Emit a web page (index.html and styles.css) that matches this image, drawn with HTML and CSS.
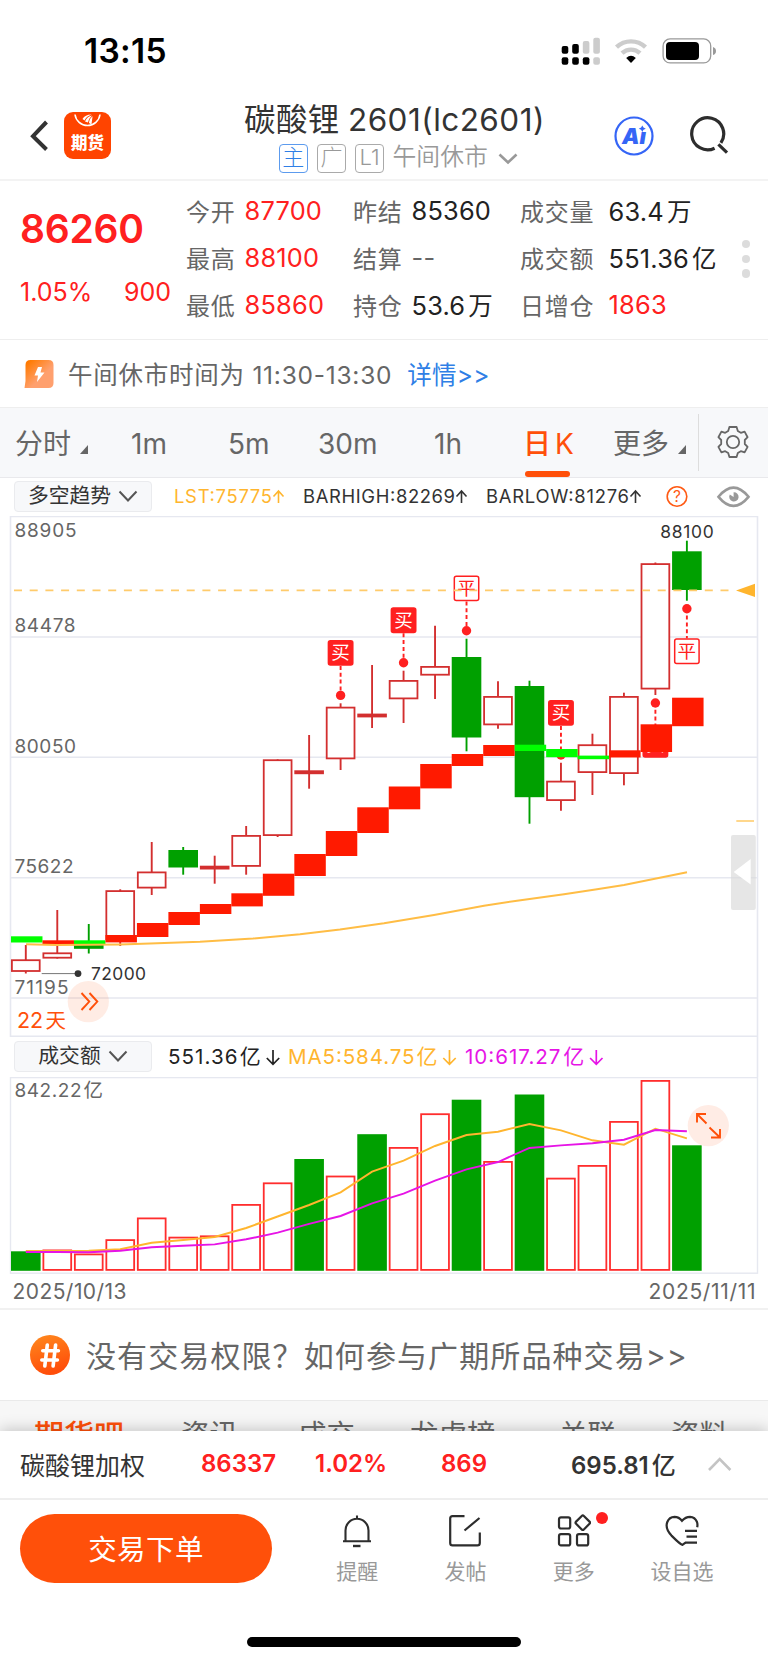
FILE: index.html
```html
<!DOCTYPE html>
<html lang="zh-CN">
<head>
    <meta charset="UTF-8">
    <meta name="viewport" content="width=device-width, initial-scale=1.0">
    <title>碳酸锂2601(lc2601)</title>
    <link rel="stylesheet" href="styles.css">
</head>
<body>
    <div class="statusbar">
        <span class="time">13:15</span>
        <svg class="status-icons" width="160" height="36" viewBox="558 34 160 36">
            <g fill="#000">
                <rect x="561.7" y="46" width="6.6" height="7.8" rx="2"/>
                <rect x="572.2" y="44" width="6.6" height="9.8" rx="2"/>
                <rect x="561.7" y="57.2" width="6.6" height="7.6" rx="2"/>
                <rect x="572.2" y="57.2" width="6.6" height="7.6" rx="2"/>
                <rect x="582.8" y="57.2" width="6.6" height="7.6" rx="2"/>
            </g>
            <g fill="#ccc">
                <rect x="582.8" y="41" width="6.6" height="12.8" rx="2"/>
                <rect x="593.3" y="37.7" width="6.6" height="16.1" rx="2"/>
                <rect x="593.3" y="57.2" width="6.6" height="7.6" rx="2"/>
            </g>
            <path d="M616.5 47.2 A21 21 0 0 1 645.5 47.2" fill="none" stroke="#ccc" stroke-width="4.4"/>
            <path d="M622 53.2 A13 13 0 0 1 640 53.2" fill="none" stroke="#ccc" stroke-width="4.4"/>
            <path d="M626.2 58 Q631 53.6 635.8 58 L631 63 Z" fill="#000"/>
            <rect x="663.1" y="38.9" width="47.6" height="24" rx="7" fill="none" stroke="#999" stroke-width="1.3"/>
            <rect x="666" y="42" width="33" height="18" rx="4" fill="#000"/>
            <path d="M713 47 Q716 48 716 51 Q716 54 713 55 Z" fill="#999"/>
        </svg>
    </div>

    <div class="header">
        <svg class="back" width="20" height="34" viewBox="0 0 20 34"><path d="M16.5 3 L3 17.2 L16.5 30.5" fill="none" stroke="#333" stroke-width="4"/></svg>
        <div class="logo">
            <svg width="47" height="20" viewBox="0 0 47 20">
                <path d="M11 0 A12.6 12.6 0 0 0 36 0" transform="translate(0,2.5)" fill="none" stroke="#fff" stroke-width="1.6"/>
                <path d="M18.5 7 Q21 2.5 27.5 2.5 Q22 4.5 20.5 8.5 Z M21 9.5 Q23 4.5 28 3.5 Q25 6 24 10.5 Z M25 11 Q25 7 28.6 4.2 Q28 8 27.5 12.5 Z" fill="#fff"/>
            </svg>
            <span>期货</span>
        </div>
        <div class="title">
            <h1>碳酸锂 <b>2601(lc2601)</b></h1>
            <div class="tags">
                <span class="tag tag-main">主</span>
                <span class="tag">广</span>
                <span class="tag">L1</span>
                <span class="state">午间休市</span>
                <svg width="20" height="14" viewBox="0 0 20 14"><path d="M1.5 2.5 L10 10.5 L18.5 2.5" fill="none" stroke="#999" stroke-width="2.6"/></svg>
            </div>
        </div>
        <svg class="ai" width="40" height="40" viewBox="0 0 40 40">
            <circle cx="20" cy="20" r="18.5" fill="none" stroke="#3565f6" stroke-width="2.2"/>
            <text class="ai-text" x="8" y="27.6">Aı</text>
            <path d="M28.3 9.4 L29.5 11.5 L31.8 12.7 L29.5 13.8 L28.3 16 L27.1 13.8 L24.8 12.7 L27.1 11.5 Z" fill="#3565f6"/>
        </svg>
        <svg class="search" width="40" height="40" viewBox="0 0 40 40">
            <path d="M25.6 32.2 A16 16 0 1 1 31.9 26.8" fill="none" stroke="#2d2d2d" stroke-width="3.2"/>
            <path d="M29.4 28.4 L38 36.6" stroke="#2d2d2d" stroke-width="3.2"/>
        </svg>
    </div>

    <div class="quote">
        <div class="price">
            <div class="last">86260</div>
            <div class="change"><span>1.05%</span><span>900</span></div>
        </div>
        <div class="grid">
            <label>今开</label><span class="red">87700</span>
            <label>昨结</label><span>85360</span>
            <label>成交量</label><span>63.4<i>万</i></span>
            <label>最高</label><span class="red">88100</span>
            <label>结算</label><span class="none">--</span>
            <label>成交额</label><span>551.36<i>亿</i></span>
            <label>最低</label><span class="red">85860</span>
            <label>持仓</label><span>53.6<i>万</i></span>
            <label>日增仓</label><span class="red">1863</span>
        </div>
        <div class="dots"><i></i><i></i><i></i></div>
    </div>

    <div class="notice">
        <svg width="30" height="30" viewBox="0 0 30 30">
            <defs>
                <linearGradient id="flash" x1="0" y1="0" x2="1" y2="1">
                    <stop offset="0.1" stop-color="#ff7a00"/>
                    <stop offset="0.6" stop-color="#ffa06e"/>
                </linearGradient>
            </defs>
            <path d="M0.5 29 L1.5 22 V6 Q1.5 1 6.5 1 H24.5 Q29.5 1 29.5 6 V24 Q29.5 29 24.5 29 Z" fill="url(#flash)"/>
            <path d="M14 8 L10.5 16.5 H14 L13 23 L20.5 13.5 H16.5 L18 8 Z" fill="#fff"/>
        </svg>
        <span class="notice-text">午间休市时间为 11:30-13:30</span>
        <a>详情&gt;&gt;</a>
    </div>

    <div class="periods">
        <span>分时<i class="corner"></i></span>
        <span>1m</span>
        <span>5m</span>
        <span>30m</span>
        <span>1h</span>
        <span class="active">日<em>K</em></span>
        <span>更多<i class="corner"></i></span>
        <div class="gear">
            <svg width="34" height="36" viewBox="-17 -18 34 36">
                <g fill="none" stroke="#666" stroke-width="1.8" stroke-linejoin="round">
                    <circle r="6.2"/>
                    <path d="M-3.6 -15 H3.6 L4.8 -11 L7.8 -9.2 L11.6 -10.4 L14.6 -4.8 L11.8 -2 V2 L14.6 4.8 L11.6 10.4 L7.8 9.2 L4.8 11 L3.6 15 H-3.6 L-4.8 11 L-7.8 9.2 L-11.6 10.4 L-14.6 4.8 L-11.8 2 V-2 L-14.6 -4.8 L-11.6 -10.4 L-7.8 -9.2 L-4.8 -11 Z"/>
                </g>
            </svg>
        </div>
    </div>

    <div class="indicator">
        <div class="select"><span>多空趋势</span><svg width="20" height="13" viewBox="0 0 20 13"><path d="M1.5 1.5 L10 10.5 L18.5 1.5" fill="none" stroke="#555" stroke-width="2"/></svg></div>
        <svg class="legend" width="616" height="38" viewBox="152 478 616 38">
            <g font-size="18.4">
                <text x="174" y="503" textLength="98" fill="#ffb52e">LST:75775</text>
                <text x="303" y="503" textLength="152" fill="#333">BARHIGH:82269</text>
                <text x="486" y="503" textLength="143" fill="#333">BARLOW:81276</text>
            </g>
            <g fill="none" stroke-width="1.6">
                <path d="M278.5 503 V491 M273.5 496.5 L278.5 491 L283.5 496.5" stroke="#ffb52e"/>
                <path d="M461.5 503 V491 M456.5 496.5 L461.5 491 L466.5 496.5" stroke="#333"/>
                <path d="M635.5 503 V491 M630.5 496.5 L635.5 491 L640.5 496.5" stroke="#333"/>
            </g>
            <circle cx="677" cy="496.5" r="9.8" fill="none" stroke="#ff5a14" stroke-width="1.6"/>
            <text x="677" y="502" font-size="15.5" text-anchor="middle" fill="#ff5a14">?</text>
            <path d="M718.5 496.8 Q733.5 478.5 748.5 496.8 Q733.5 515 718.5 496.8 Z" fill="none" stroke="#999" stroke-width="2.6"/>
            <path d="M733.6 492.2 V497 L729.8 494.6 A4.7 4.7 0 1 0 733.6 492.2 Z" fill="#999"/>
        </svg>
    </div>

    <svg class="chart" id="kline" width="768" height="521" viewBox="0 516 768 521">
        <g stroke="#e6e8f0" stroke-width="1.6" fill="none">
            <path d="M10.5 1037 V516.5 H757.5 V1037"/>
            <path d="M10.5 637 H757.5 M10.5 757.3 H757.5 M10.5 877.7 H757.5 M10.5 998 H757.5 M10.5 1036.3 H757.5"/>
        </g>
        <g font-size="19" fill="#666">
            <text x="14.5" y="536.8" textLength="62">88905</text>
            <text x="14.5" y="632.2" textLength="61">84478</text>
            <text x="14.5" y="752.8" textLength="61.5">80050</text>
            <text x="14.5" y="873.2" textLength="59">75622</text>
            <text x="14.5" y="993.8" textLength="54">71195</text>
        </g>
        <g id="candles"></g>
        <g id="markers"></g>
        <g id="trend"></g>
        <path d="M26 944.3 L56 944.9 L120 944.4 L150 943.6 L200 941.8 L253 938.5 L300 934.2 L340 929.6 L384 923.3 L434 915 L484 905.7 L517 900.7 L564 894.3 L597 889.3 L624 885 L687 872.3" fill="none" stroke="#ffbd45" stroke-width="2"/>
        <path d="M14 590.4 H732" stroke="#ffcb6b" stroke-width="1.6" stroke-dasharray="8 7.7"/>
        <path d="M736 590.4 L755 583.8 V597 Z" fill="#ffb52e"/>
        <path d="M736.3 821 H754" stroke="#ffd78c" stroke-width="2"/>
        <rect x="731" y="835" width="24.8" height="75" rx="2" fill="#d9d9d9" fill-opacity="0.65"/>
        <path d="M733.7 872 L750.7 859 V884.6 Z" fill="#fff"/>
        <text x="687" y="538" text-anchor="middle" font-size="17.4" textLength="53.5" fill="#333">88100</text>
        <path d="M41.7 973.6 H78" stroke="#777" stroke-width="1"/>
        <circle cx="78" cy="973.6" r="3.4" fill="#333"/>
        <text x="91" y="980" font-size="17.4" textLength="55" fill="#333">72000</text>
        <circle cx="88.3" cy="1001.6" r="20.6" fill="#ff500a" fill-opacity="0.11"/>
        <path d="M81.5 993 L89.3 1001.6 L81.5 1010 M89.5 993 L97.3 1001.6 L89.5 1010" fill="none" stroke="#ff500a" stroke-width="1.9"/>
        <text x="17" y="1028" font-size="21.5" textLength="26" fill="#ff500a">22</text>
        <text x="45.5" y="1027.6" font-size="20.5" fill="#ff500a">天</text>
    </svg>

    <div class="indicator sub">
        <div class="select"><span>成交额</span><svg width="20" height="13" viewBox="0 0 20 13"><path d="M1.5 1.5 L10 10.5 L18.5 1.5" fill="none" stroke="#555" stroke-width="2"/></svg></div>
        <svg class="legend" width="616" height="40" viewBox="152 1037 616 40">
            <path d="M757.5 1037 V1077" stroke="#e6e8f0" stroke-width="1.6"/>
            <g font-size="20.6">
                <text x="168" y="1064.4" textLength="69.5" fill="#222">551.36</text>
                <text x="239.8" y="1064.4" font-size="21" fill="#222">亿</text>
                <text x="288" y="1064.4" textLength="126.5" fill="#ffb52e">MA5:584.75</text>
                <text x="416.6" y="1064.4" font-size="21" fill="#ffb52e">亿</text>
                <text x="465" y="1064.4" textLength="95.5" fill="#e614e6">10:617.27</text>
                <text x="563.2" y="1064.4" font-size="21" fill="#e614e6">亿</text>
            </g>
            <g fill="none" stroke-width="1.7">
                <path d="M273 1050 V1064 M266.8 1058 L273 1064.3 L279.2 1058" stroke="#222"/>
                <path d="M449.5 1050 V1064 M443.3 1058 L449.5 1064.3 L455.7 1058" stroke="#ffb52e"/>
                <path d="M596.3 1050 V1064 M590.1 1058 L596.3 1064.3 L602.5 1058" stroke="#e614e6"/>
            </g>
        </svg>
    </div>

    <svg class="chart" id="volume" width="768" height="231" viewBox="0 1077 768 231">
        <rect x="10.5" y="1077.6" width="747" height="195.6" fill="none" stroke="#e6e8f0" stroke-width="1.4"/>
        <text x="14.5" y="1096.6" font-size="19" textLength="67" fill="#666">842.22</text>
        <text x="83.6" y="1096.6" font-size="19.5" fill="#666">亿</text>
        <g id="bars"></g>
        <polyline id="ma5" fill="none" stroke="#ffb52e" stroke-width="1.9"/>
        <polyline id="ma10" fill="none" stroke="#e614e6" stroke-width="1.9"/>
        <circle cx="708.3" cy="1125.6" r="20.6" fill="#ffece5"/>
        <path d="M706.5 1123.5 L697 1114 M697 1122.5 V1114 H706 M709.5 1127.5 L720 1137.5 M720 1129 V1137.5 H711" fill="none" stroke="#ff500a" stroke-width="1.9"/>
        <text x="12.5" y="1298.6" font-size="21" textLength="114" fill="#666">2025/10/13</text>
        <text x="648.5" y="1298.6" font-size="21" textLength="107" fill="#666">2025/11/11</text>
    </svg>

    <div class="prompt">
        <svg width="40" height="40" viewBox="0 0 40 40">
            <defs>
                <linearGradient id="hash" x1="0" y1="0" x2="0.3" y2="1">
                    <stop offset="0" stop-color="#ff8a1e"/>
                    <stop offset="1" stop-color="#ff4e0a"/>
                </linearGradient>
            </defs>
            <circle cx="20" cy="20" r="20" fill="url(#hash)"/>
            <path d="M17.3 10 L14.8 31 M25.6 10 L23.1 31 M12.8 15.8 H28.4 M11.8 25 H27.4" stroke="#fff" stroke-width="3.6" stroke-linecap="round"/>
        </svg>
        <span>没有交易权限？如何参与广期所品种交易&gt;&gt;</span>
    </div>

    <div class="tabs">
        <span class="active">期货吧</span>
        <span>资讯</span>
        <span>成交</span>
        <span>龙虎榜</span>
        <span>关联</span>
        <span>资料</span>
    </div>

    <div class="bottom">
        <div class="summary">
            <span class="name">碳酸锂加权</span>
            <span class="num">86337</span>
            <span class="num">1.02%</span>
            <span class="num">869</span>
            <span class="num amount">695.81<i>亿</i></span>
            <svg width="26" height="16" viewBox="0 0 26 16"><path d="M2 14 L12.7 3 L23.4 14" fill="none" stroke="#c4c4c4" stroke-width="2.6"/></svg>
        </div>
        <div class="actions">
            <button>交易下单</button>
            <div class="action">
                <svg width="34" height="36" viewBox="0 0 34 36">
                    <g fill="none" stroke="#2d2d2d" stroke-width="2.1">
                        <path d="M17 1.5 V5 M5.5 27 V16.5 A11.5 11.8 0 0 1 28.5 16.5 V27 M3 27.3 H31"/>
                        <path d="M13 32 H20.5" stroke-width="2.4"/>
                    </g>
                </svg>
                <span>提醒</span>
            </div>
            <div class="action">
                <svg width="34" height="36" viewBox="0 0 34 36">
                    <path d="M16.5 2.2 H4.5 Q2.2 2.2 2.2 4.5 V29 Q2.2 31.4 4.5 31.4 H29.5 Q31.8 31.4 31.8 29 V18.5 M16.5 16.5 L31.5 4" fill="none" stroke="#2d2d2d" stroke-width="2.2"/>
                </svg>
                <span>发帖</span>
            </div>
            <div class="action">
                <svg width="34" height="36" viewBox="0 0 34 36">
                    <g fill="none" stroke="#2d2d2d" stroke-width="2.2">
                        <rect x="2" y="3.3" width="11.2" height="11.2" rx="2"/>
                        <rect x="2" y="20.2" width="11.2" height="11.2" rx="2"/>
                        <rect x="20" y="20.2" width="11.2" height="11.2" rx="2"/>
                        <rect x="20.3" y="3.2" width="11" height="11" rx="1.5" transform="rotate(45 25.8 8.7)"/>
                    </g>
                </svg>
                <i class="reddot"></i>
                <span>更多</span>
            </div>
            <div class="action">
                <svg width="34" height="36" viewBox="0 0 34 36">
                    <g fill="none" stroke="#2d2d2d" stroke-width="2.2">
                        <path d="M20.5 28.6 L17.4 30.8 Q15.5 30.6 6.5 21.6 Q-0.2 14.5 2.3 8 Q4.2 3 9.5 2.8 Q14 2.8 17 6.8 Q20.5 2.8 25 2.8 Q30 3 32 8 Q32.8 10.5 32.2 13.2"/>
                        <path d="M20 16.8 H32 M21.5 22.7 H32 M20 28.6 H32"/>
                    </g>
                </svg>
                <span>设自选</span>
            </div>
        </div>
        <div class="home"></div>
    </div>

    <script src="chart.js"></script>
</body>
</html>
```
FILE: styles.css
```css
* {
    box-sizing: border-box;
}

body {
    margin: 0;
    width: 768px;
    height: 1663px;
    overflow: hidden;
    display: flex;
    flex-direction: column;
    background: #fff;
    color: #333;
    font-family: Inter, "Noto Sans CJK SC", sans-serif;
    white-space: nowrap;
}

body > div {
    flex: none;
}

svg {
    display: block;
    flex: none;
}

i, em {
    font-style: normal;
}

/* status bar */
.statusbar {
    height: 92px;
    display: flex;
    justify-content: space-between;
    padding: 31px 50px 0 84px;
}

.time {
    font-size: 33.5px;
    line-height: 40px;
    font-weight: 600;
    color: #000;
    letter-spacing: 0.3px;
}

.status-icons {
    margin-top: 3px;
}

/* header */
.header {
    height: 89px;
    border-bottom: 2px solid #f3f3f3;
    display: flex;
    padding-left: 28px;
}

.back {
    margin: 27px 16px 0 2px;
}

.logo {
    width: 47px;
    height: 47px;
    margin: 20px 0 0 -2px;
    border-radius: 9px;
    background: #ff4400;
    color: #fff;
    text-align: center;
    overflow: hidden;
}

.logo span {
    display: block;
    font-size: 16.5px;
    line-height: 22px;
    font-weight: 900;
}

.title {
    width: 300px;
    margin: 6px 0 0 133px;
}

.title h1 {
    margin: 0;
    font-size: 31.5px;
    line-height: 44px;
    font-weight: 400;
    letter-spacing: 0.4px;
}

.title b {
    font-weight: 400;
    letter-spacing: 0.45px;
    margin-left: -1px;
}

.tags {
    display: flex;
    align-items: center;
    margin: 2px 0 0 35px;
    height: 29px;
    color: #999;
}

.tag {
    width: 28.5px;
    height: 28.5px;
    border: 1.5px solid #aaa;
    border-radius: 4px;
    margin-right: 9.7px;
    font-size: 22px;
    line-height: 25px;
    font-weight: 300;
    text-align: center;
}

.tag-main {
    color: #2f7fe6;
    border-color: #5c9bee;
}

.state {
    font-size: 23.8px;
    font-weight: 350;
    line-height: 28px;
    margin: -3px 10px 0 -1px;
}

.ai {
    margin: 24px 0 0 70px;
}

.ai-text {
    font-size: 22px;
    font-weight: 900;
    font-style: italic;
    fill: #3565f6;
}

.search {
    margin: 24px 0 0 34.5px;
}

/* quote */
.quote {
    height: 159px;
    border-bottom: 1px solid #eee;
    display: flex;
}

.price {
    width: 186px;
    padding-left: 20px;
    color: #ff2020;
}

.last {
    margin-top: 24px;
    font-size: 39px;
    line-height: 48px;
    font-weight: 600;
    letter-spacing: -0.2px;
}

.change {
    display: flex;
    justify-content: space-between;
    margin-top: 23px;
    padding-right: 15px;
    font-size: 25px;
    line-height: 32px;
}

.grid {
    display: grid;
    grid-template-columns: 58.5px 108.5px 58.5px 108.5px 88.5px 124.5px;
    grid-template-rows: repeat(3, 47px);
    align-items: center;
    height: 141px;
    margin-top: 6px;
    font-size: 25.4px;
    color: #222;
    letter-spacing: 0.2px;
}

.grid label {
    font-size: 24px;
    color: #666;
    letter-spacing: 0.8px;
}

.grid i {
    font-size: 24.5px;
    margin-left: 3px;
}

.grid .red {
    color: #ff2020;
}

.grid .none {
    color: #666;
}

.dots {
    padding: 59px 0 0 9px;
    display: flex;
    flex-direction: column;
    gap: 6.3px;
}

.dots i {
    width: 8.4px;
    height: 8.4px;
    border-radius: 50%;
    background: #dcdcdc;
}

/* notice */
.notice {
    height: 68px;
    display: flex;
    align-items: center;
    padding-left: 24px;
    font-size: 24.5px;
    color: #666;
    border-bottom: 1px solid #eee;
}

.notice-text {
    margin: 0 15px 0 14px;
    letter-spacing: 0.75px;
}

.notice a {
    color: #2f7fe6;
    letter-spacing: 0.3px;
}

/* periods */
.periods {
    height: 70px;
    background: #f7f8fa;
    border-bottom: 1px solid #e9e9ec;
    display: grid;
    grid-template-columns: 131px 97px 90px 116px 89px 90px 85px 70px;
    line-height: 72px;
    font-size: 28px;
    color: #666;
}

.periods span:first-child {
    padding-left: 15px;
}

.corner {
    display: inline-block;
    margin-left: 9px;
    border-left: 8px solid transparent;
    border-bottom: 9px solid #666;
}

.periods .active {
    color: #ff500a;
    font-weight: 500;
    position: relative;
}

.active em {
    margin-left: 4px;
    font-weight: 400;
}

.periods .active::after {
    content: "";
    position: absolute;
    left: 2px;
    bottom: 3px;
    width: 45px;
    height: 6px;
    border-radius: 3px;
    background: #ff500a;
}

.gear {
    height: 57px;
    margin-top: 6px;
    border-left: 1px solid #ddd;
    padding: 10px 0 0 17px;
}

/* indicator rows */
.indicator {
    height: 38px;
    display: flex;
}

.indicator.sub {
    height: 40px;
}

.select {
    width: 138px;
    height: 31px;
    margin: 3px 0 0 14px;
    border: 1px solid #eaebee;
    border-radius: 4px;
    background: #f7f8fa;
    display: flex;
    align-items: center;
    justify-content: center;
    gap: 7px;
    font-size: 20.8px;
}

.select span {
    line-height: 28px;
    margin-top: -2px;
}

.sub .select {
    margin-top: 4px;
}

.chart {
    flex: none;
}

/* prompt */
.prompt {
    height: 93px;
    border-top: 2px solid #f1f1f1;
    border-bottom: 1px solid #eaeaea;
    display: flex;
    align-items: center;
    padding: 0 0 1px 30px;
    font-size: 30px;
    color: #666;
}

.prompt span {
    margin: -2px 0 0 16px;
    letter-spacing: 1.1px;
}

/* tabs cut off by the bottom panel */
.tabs {
    height: 30px;
    background: #f7f7f7;
    display: grid;
    grid-template-columns: 147px 117px 112px 149px 112px 96px;
    padding-left: 34px;
    padding-top: 14px;
    overflow: hidden;
    font-size: 28.5px;
    line-height: 40px;
    color: #666;
}

.tabs .active {
    color: #ff500a;
    font-weight: 500;
    font-size: 30px;
}

/* bottom panel */
.bottom {
    height: 232px;
    background: #fff;
    position: relative;
    box-shadow: 0 -2px 14px rgba(0, 0, 0, 0.2);
}

.summary {
    height: 69px;
    border-bottom: 2px solid #eee;
    display: grid;
    grid-template-columns: 181px 114px 126px 130px 136px 26px;
    align-items: center;
    padding: 0 0 2px 20px;
    font-size: 24px;
}

.summary .name {
    font-size: 25px;
}

.num {
    color: #ff2020;
    font-weight: 600;
}

.summary .amount {
    color: #333;
}

.amount i {
    margin-left: 3px;
    font-weight: 500;
}

.actions {
    display: flex;
    padding-left: 20px;
}

.actions button {
    width: 252px;
    height: 69px;
    margin: 14px 31px 0 0;
    padding-bottom: 3px;
    border: none;
    border-radius: 35px;
    background: #ff500a;
    color: #fff;
    font-family: inherit;
    font-size: 28.5px;
    letter-spacing: 0.4px;
}

.action {
    width: 108.3px;
    padding-top: 14px;
    display: flex;
    flex-direction: column;
    align-items: center;
    position: relative;
}

.action span {
    margin-top: 7px;
    font-size: 21px;
    line-height: 30px;
    color: #999;
}

.reddot {
    position: absolute;
    left: 76px;
    top: 12px;
    width: 12px;
    height: 12px;
    border-radius: 50%;
    background: #ff2020;
}

.home {
    width: 274px;
    height: 10px;
    margin: 50px auto 0;
    border-radius: 5px;
    background: #000;
}
```
FILE: chart.js
```js
var NS = "http://www.w3.org/2000/svg";
var LEFT = 11;      // left edge of the first candle
var STEP = 31.48;   // distance between two candles
var BODY = 29.6;    // candle width

// [body top, body bottom, high, low, color]
var candles = [
    [959.3, 971.9, 945, 973.5, "r"],
    [952.4, 958.6, 910, 958.6, "r"],
    [945, 948.8, 924, 953.5, "g"],
    [890.2, 940, 889.3, 946, "r"],
    [871.5, 888.5, 842, 895, "r"],
    [850, 867.5, 847, 874.7, "g"],
    [865.7, 869.5, 855.7, 883.7, "d"],
    [835, 866.8, 826, 874.7, "r"],
    [759.3, 836, 759.3, 837, "r"],
    [770.3, 774.2, 735, 788.7, "d"],
    [706.7, 759.3, 703.3, 770, "r"],
    [713.6, 717.4, 665, 728, "d"],
    [680, 699.3, 670.7, 723, "r"],
    [666, 675.6, 625.7, 699, "r"],
    [657, 737.5, 638.7, 751.3, "g"],
    [696, 725.3, 681.3, 728.7, "r"],
    [686, 797.2, 680.7, 823.7, "g"],
    [780.7, 801, 762.7, 810.7, "r"],
    [744.3, 773, 733.7, 795, "r"],
    [696, 774, 692.7, 785.3, "r"],
    [563.2, 689.5, 562.5, 695, "r"],
    [551.3, 590, 540.7, 600.7, "g"]
];

// [top, bottom, rising]
var trend = [
    [936.3, 942.5, 0], [940.3, 944.4, 1], [940.3, 944.4, 0], [935, 942.4, 1],
    [923, 937, 1], [912, 925, 1], [904, 914, 1], [893.3, 906.4, 1],
    [873.7, 895.8, 1], [854, 876, 1], [831, 856, 1], [807.3, 833, 1],
    [786.5, 809.3, 1], [764, 788.4, 1], [754, 766, 1], [745, 756, 1],
    [744.7, 751, 0], [749, 757.2, 0], [755.6, 759.2, 0], [750.3, 757.5, 1],
    [724.3, 752, 1], [697.7, 726.2, 1]
];

// [candle, badge top, dot y, text]
var markers = [
    [10, 640, 695.4, "买"],
    [12, 607.3, 662.7, "买"],
    [14, 575.5, 630.7, "平"],
    [17, 700, 755, "买"],
    [20, 732, 703, "买"],
    [21, 638.3, 608.8, "平"]
];

// [bar top, color, ma5, ma10]
var volumes = [
    [1251.3, "g", 1251, 1252], [1249.5, "r", 1251, 1252], [1253.5, "r", 1250.8, 1252.2],
    [1239.2, "r", 1249.2, 1250.7], [1217.5, "r", 1242.7, 1247.3], [1236.7, "r", 1240, 1245.7],
    [1235.4, "r", 1237, 1244.4], [1204, "r", 1228, 1239.3], [1182.4, "r", 1216.5, 1232.7],
    [1159, "g", 1205, 1223.8], [1175.6, "r", 1192.3, 1216], [1134.2, "g", 1171.7, 1203.3],
    [1147, "r", 1160.7, 1193.7], [1113.3, "r", 1146, 1180.7], [1099.7, "g", 1135, 1169.4],
    [1161, "r", 1131.7, 1162], [1094.5, "g", 1124, 1148], [1177.7, "r", 1130.3, 1145.4],
    [1165, "r", 1140.3, 1143.3], [1121, "r", 1144.7, 1139.7], [1080, "r", 1128.7, 1130],
    [1145.3, "g", 1138.3, 1131.3]
];

function add(parent, tag, attrs) {
    var el = document.createElementNS(NS, tag);
    for (var key in attrs) {
        el.setAttribute(key, attrs[key]);
    }
    document.getElementById(parent).appendChild(el);
    return el;
}

function centre(i) {
    return LEFT + i * STEP + BODY / 2;
}

// hollow or filled box
function box(parent, i, top, bottom, color, hollow) {
    var x = LEFT + i * STEP;
    if (hollow) {
        add(parent, "rect", {x: x + 0.9, y: top + 0.9, width: BODY - 1.8, height: bottom - top - 1.8,
            fill: "#fff", stroke: color, "stroke-width": 1.8});
    } else {
        add(parent, "rect", {x: x, y: top, width: BODY, height: bottom - top, fill: color});
    }
}

candles.forEach(function (c, i) {
    var color = c[4] == "g" ? "#00a000" : "#d32f2f";
    add("candles", "path", {d: "M" + centre(i) + " " + c[2] + " V" + c[3], stroke: color, "stroke-width": 1.9});
    box("candles", i, c[0], c[1], color, c[4] == "r");
});

trend.forEach(function (t, i) {
    add("trend", "rect", {x: LEFT + i * STEP, y: t[0], width: STEP, height: t[1] - t[0], fill: t[2] ? "#ff1a00" : "#00ff00"});
});

markers.forEach(function (m) {
    var x = centre(m[0]);
    var above = m[1] < m[2];
    var buy = m[3] == "买";
    add("markers", "path", {d: "M" + x + " " + (above ? m[1] + 26 : m[2]) + " V" + (above ? m[2] : m[1]),
        stroke: "#ff2020", "stroke-width": 1.9, "stroke-dasharray": "4 2.8"});
    add("markers", "circle", {cx: x, cy: m[2], r: 4.7, fill: "#ff2020"});
    add("markers", "rect", {x: x - 12.2, y: m[1] + 0.7, width: 24.4, height: 24.4, rx: 2,
        fill: buy ? "#ff2020" : "#fff", stroke: "#ff2020", "stroke-width": 1.5});
    var text = add("markers", "text", {x: x, y: m[1] + 19.2, "font-size": 18.5, "text-anchor": "middle",
        fill: buy ? "#fff" : "#ff2020"});
    text.textContent = m[3];
});

volumes.forEach(function (v, i) {
    box("bars", i, v[0], 1270.8, v[1] == "g" ? "#00a000" : "#ff2d2d", v[1] == "r");
});

function line(id, col) {
    document.getElementById(id).setAttribute("points", volumes.map(function (v, i) {
        return centre(i) + "," + v[col];
    }).join(" "));
}
line("ma5", 2);
line("ma10", 3);
```
